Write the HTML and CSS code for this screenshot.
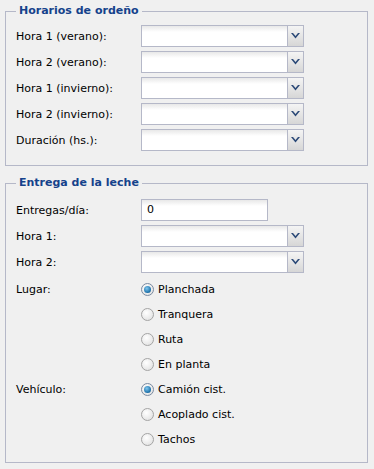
FILE: index.html
```html
<!DOCTYPE html>
<html lang="es">
<head>
  <meta charset="UTF-8">
  <title>Ordeño y entrega</title>
  <link rel="stylesheet" href="styles.css">
</head>
<body>
  <!-- HORARIOS -->
  <fieldset class="group group-first">
    <legend>Horarios de ordeño</legend>
    <div class="row"><span class="lbl">Hora 1 (verano):</span><div class="combo"><div class="combo-input"></div><div class="trigger"><svg width="9" height="6" viewBox="0 0 9 6"><path d="M0 0h2l2.5 3L7 0h2L4.5 5.5z" fill="#2c4a78"/></svg></div></div></div>
    <div class="row"><span class="lbl">Hora 2 (verano):</span><div class="combo"><div class="combo-input"></div><div class="trigger"><svg width="9" height="6" viewBox="0 0 9 6"><path d="M0 0h2l2.5 3L7 0h2L4.5 5.5z" fill="#2c4a78"/></svg></div></div></div>
    <div class="row"><span class="lbl">Hora 1 (invierno):</span><div class="combo"><div class="combo-input"></div><div class="trigger"><svg width="9" height="6" viewBox="0 0 9 6"><path d="M0 0h2l2.5 3L7 0h2L4.5 5.5z" fill="#2c4a78"/></svg></div></div></div>
    <div class="row"><span class="lbl">Hora 2 (invierno):</span><div class="combo"><div class="combo-input"></div><div class="trigger"><svg width="9" height="6" viewBox="0 0 9 6"><path d="M0 0h2l2.5 3L7 0h2L4.5 5.5z" fill="#2c4a78"/></svg></div></div></div>
    <div class="row"><span class="lbl">Duración (hs.):</span><div class="combo"><div class="combo-input"></div><div class="trigger"><svg width="9" height="6" viewBox="0 0 9 6"><path d="M0 0h2l2.5 3L7 0h2L4.5 5.5z" fill="#2c4a78"/></svg></div></div></div>
  </fieldset>

  <!-- ENTREGA -->
  <fieldset class="group group-second">
    <legend>Entrega de la leche</legend>
    <div class="row"><span class="lbl">Entregas/día:</span><div class="textfield">0</div></div>
    <div class="row"><span class="lbl">Hora 1:</span><div class="combo"><div class="combo-input"></div><div class="trigger"><svg width="9" height="6" viewBox="0 0 9 6"><path d="M0 0h2l2.5 3L7 0h2L4.5 5.5z" fill="#2c4a78"/></svg></div></div></div>
    <div class="row"><span class="lbl">Hora 2:</span><div class="combo"><div class="combo-input"></div><div class="trigger"><svg width="9" height="6" viewBox="0 0 9 6"><path d="M0 0h2l2.5 3L7 0h2L4.5 5.5z" fill="#2c4a78"/></svg></div></div></div>

    <div class="radio-row first">
      <span class="lbl">Lugar:</span>
      <div class="radios">
        <div class="radio"><span class="dot checked"></span>Planchada</div>
        <div class="radio"><span class="dot"></span>Tranquera</div>
        <div class="radio"><span class="dot"></span>Ruta</div>
        <div class="radio"><span class="dot"></span>En planta</div>
      </div>
    </div>
    <div class="radio-row">
      <span class="lbl">Vehículo:</span>
      <div class="radios">
        <div class="radio"><span class="dot checked"></span>Camión cist.</div>
        <div class="radio"><span class="dot"></span>Acoplado cist.</div>
        <div class="radio"><span class="dot"></span>Tachos</div>
      </div>
    </div>
  </fieldset>
</body>
</html>
```

FILE: styles.css
```css
*{box-sizing:border-box}
body{margin:0;padding:4px 6px 0 5px;background:#f0f0f0;color:#000;font-family:"DejaVu Sans",Tahoma,sans-serif;font-size:11px}
.group{margin:0;border:1px solid #b5b8c8;padding:7px 10px 14px 10px;width:363px}
.group legend{padding:0 3px;margin-left:0;font-weight:bold;color:#15428b;font-size:11px;line-height:14px}
.group-second{margin-top:10px;padding-top:9px;padding-bottom:10px}
.row{display:flex;align-items:center;height:22px;margin-bottom:4px}
.row:last-child{margin-bottom:0}
.lbl{width:125px;flex:none}
.combo{display:flex;width:163px;height:22px}
.combo-input{flex:1;border:1px solid #b5b8c8;border-right:none;background:linear-gradient(#e8e8e8,#fff 6px)}
.trigger{width:17px;display:flex;align-items:center;justify-content:center;border:1px solid #b5b8c8;background:linear-gradient(#f4f4f4,#d6d6d6)}
.textfield{width:127px;height:22px;border:1px solid #b5b8c8;background:linear-gradient(#e8e8e8,#fff 6px);padding:3px 0 0 5px;line-height:14px}
.radio-row{display:flex;align-items:flex-start}
.radio-row.first{margin-top:1px}
.radio-row .lbl{line-height:25px;height:25px}
.radios{display:flex;flex-direction:column}
.radio{display:flex;align-items:center;height:25px}
.dot{width:13px;height:13px;border-radius:50%;border:1px solid #a4a4a4;background:radial-gradient(circle at 40% 35%,#fff,#dcdcdc);margin-right:4px;display:flex;align-items:center;justify-content:center}
.dot.checked{border-color:#7a8aa0}
.dot.checked::after{content:"";width:7px;height:7px;border-radius:50%;background:radial-gradient(circle at 40% 35%,#7fc6ee,#1a6fa8 70%,#0c3e66)}
```
